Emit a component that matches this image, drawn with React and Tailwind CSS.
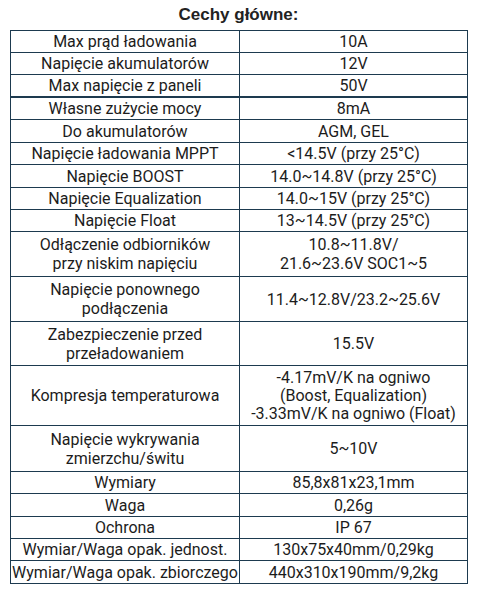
import React from 'react';

const rows = [
  { h: 'h-[22px]', left: ['Max prąd ładowania'], right: ['10A'] },
  { h: 'h-[22px]', left: ['Napięcie akumulatorów'], right: ['12V'] },
  { h: 'h-[23px]', left: ['Max napięcie z paneli'], right: ['50V'], thick: true },
  { h: 'h-[22px]', left: ['Własne zużycie mocy'], right: ['8mA'] },
  { h: 'h-[23px]', left: ['Do akumulatorów'], right: ['AGM, GEL'] },
  { h: 'h-[22px]', left: ['Napięcie ładowania MPPT'], right: ['<14.5V (przy 25°C)'] },
  { h: 'h-[23px]', left: ['Napięcie BOOST'], right: ['14.0~14.8V (przy 25°C)'] },
  { h: 'h-[22px]', left: ['Napięcie Equalization'], right: ['14.0~15V (przy 25°C)'] },
  { h: 'h-[22px]', left: ['Napięcie Float'], right: ['13~14.5V (przy 25°C)'] },
  { h: 'h-[45px]', left: ['Odłączenie odbiorników', 'przy niskim napięciu'], right: ['10.8~11.8V/', '21.6~23.6V SOC1~5'] },
  { h: 'h-[45px]', left: ['Napięcie ponownego', 'podłączenia'], right: ['11.4~12.8V/23.2~25.6V'] },
  { h: 'h-[44px]', left: ['Zabezpieczenie przed', 'przeładowaniem'], right: ['15.5V'] },
  { h: 'h-[60px]', left: ['Kompresja temperaturowa'], right: ['-4.17mV/K na ogniwo', '(Boost, Equalization)', '-3.33mV/K na ogniwo (Float)'], tight: true },
  { h: 'h-[46px]', left: ['Napięcie wykrywania', 'zmierzchu/świtu'], right: ['5~10V'] },
  { h: 'h-[22px]', left: ['Wymiary'], right: ['85,8x81x23,1mm'] },
  { h: 'h-[23px]', left: ['Waga'], right: ['0,26g'] },
  { h: 'h-[22px]', left: ['Ochrona'], right: ['IP 67'] },
  { h: 'h-[22px]', left: ['Wymiar/Waga opak. jednost.'], right: ['130x75x40mm/0,29kg'] },
  { h: 'h-[23px]', left: ['Wymiar/Waga opak. zbiorczego'], right: ['440x310x190mm/9,2kg'] },
];

const Cell = ({ lines, tight, border }) => (
  <div
    className={`flex flex-col items-center justify-center text-center ${tight ? 'leading-[18px]' : 'leading-[19px]'} ${border ? 'border-r border-[#1d3a4f]' : ''}`}
  >
    {lines.map((l, i) => (
      <span key={i} className="whitespace-nowrap">{l}</span>
    ))}
  </div>
);

export default function App() {
  return (
    <div className="w-[477px] h-[590px] bg-white text-[#1c1c1c] font-['Roboto',sans-serif]">
      <div className="h-[30px] flex items-center justify-center pb-[1px]">
        <h1 className="font-['Liberation_Sans',Arial,sans-serif] font-bold text-[17px] text-[#222]">
          Cechy główne:
        </h1>
      </div>
      <div className="ml-[10px] w-[458px] border border-b-0 border-[#1d3a4f] text-[16px]">
        {rows.map((r, i) => (
          <div
            key={i}
            className={`grid grid-cols-[229px_1fr] box-border ${r.h} ${r.thick ? 'border-b-2' : 'border-b'} border-[#1d3a4f]`}
          >
            <Cell lines={r.left} border tight={r.tight} />
            <Cell lines={r.right} tight={r.tight} />
          </div>
        ))}
      </div>
    </div>
  );
}
